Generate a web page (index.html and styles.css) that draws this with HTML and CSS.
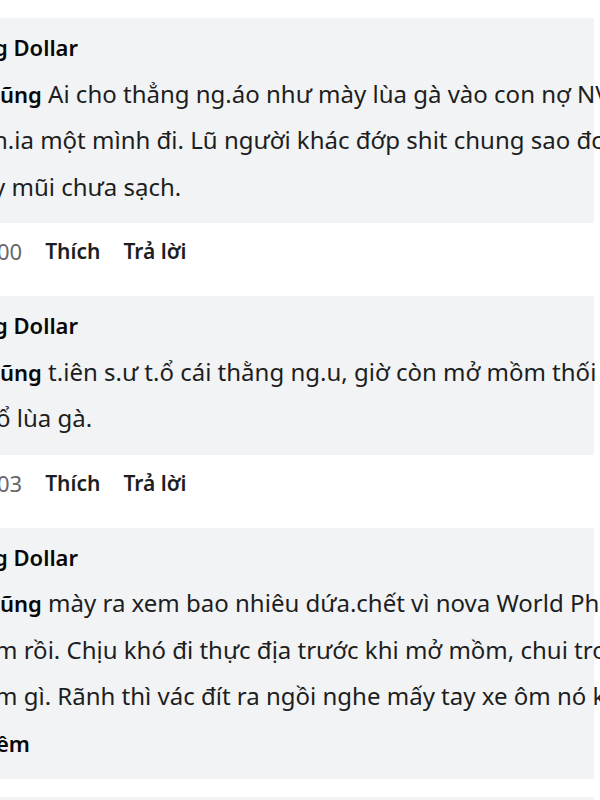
FILE: index.html
```html
<!DOCTYPE html>
<html lang="vi">
<head>
  <meta charset="UTF-8">
  <meta name="viewport" content="width=device-width, initial-scale=1.0">
  <title>Bình luận</title>
  <link rel="stylesheet" href="styles.css">
</head>
<body>

  <div class="thread">

    <!-- bình luận 1 -->
    <div class="comment">
      <div class="line name cut-6">g Dollar</div>
      <div class="line"><b>ũng</b> Ai cho thẳng ng.áo như mày lùa gà vào con nợ NV</div>
      <div class="line cut-7">h.ia một mình đi. Lũ người khác đớp shit chung sao đc</div>
      <div class="line cut-7">y mũi chưa sạch.</div>
    </div>
    <div class="actions">
      <span class="time">00</span>
      <span class="act">Thích</span>
      <span class="act">Trả lời</span>
    </div>

    <!-- bình luận 2 -->
    <div class="comment">
      <div class="line name cut-6">g Dollar</div>
      <div class="line"><b>ũng</b> t.iên s.ư t.ổ cái thằng ng.u, giờ còn mở mồm thối</div>
      <div class="line cut-4">ổ lùa gà.</div>
    </div>
    <div class="actions">
      <span class="time">03</span>
      <span class="act">Thích</span>
      <span class="act">Trả lời</span>
    </div>

    <!-- bình luận 3 -->
    <div class="comment">
      <div class="line name cut-6">g Dollar</div>
      <div class="line"><b>ũng</b> mày ra xem bao nhiêu dứa.chết vì nova World Phan Thiết</div>
      <div class="line cut-5">m rồi. Chịu khó đi thực địa trước khi mở mồm, chui trong</div>
      <div class="line cut-5">m gì. Rãnh thì vác đít ra ngồi nghe mấy tay xe ôm nó kể</div>
      <div class="line name cut-4">êm</div>
    </div>

    <div class="comment next"></div>

  </div>

</body>
</html>
```

FILE: styles.css
```css
* { margin: 0; padding: 0; box-sizing: border-box; }

body {
  font-family: 'Noto Sans', 'Open Sans', sans-serif;
  background: #fff;
  color: #1c1e21;
  overflow: hidden;
  height: 800px;
}

.thread {
  padding-top: 18px;
  width: 600px;
  height: 800px;
  overflow: hidden;
}

/* bong bóng bình luận */
.comment {
  width: 594px;
  background: #f2f3f5;
  padding: 6px 0 13px;
  font-size: 24px;
  line-height: 46.5px;
}

.comment.next {
  margin-top: 18px;
  height: 3px;
  padding: 0;
}

.line {
  white-space: nowrap;
}

.line b,
.name {
  font-weight: 600;
  color: #080809;
  font-size: 22px;
}

.cut-4 { margin-left: -4px; }
.cut-5 { margin-left: -5px; }
.cut-6 { margin-left: -6px; }
.cut-7 { margin-left: -7px; }

/* thích / trả lời */
.actions {
  display: flex;
  align-items: center;
  gap: 23px;
  height: 56px;
  margin-bottom: 17px;
  font-size: 21px;
}

.time {
  color: #65676b;
  margin-left: -3px;
  font-size: 22px;
}

.act {
  font-weight: 600;
  color: #1c1e21;
}
```
